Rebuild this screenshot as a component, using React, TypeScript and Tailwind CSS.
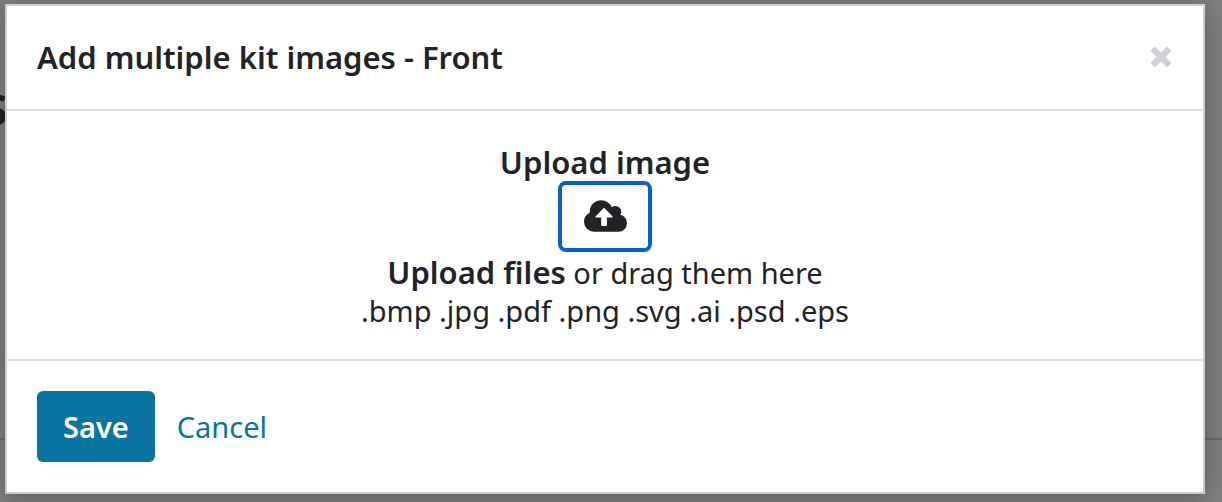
import React from 'react';

const fileTypes = ['.bmp', '.jpg', '.pdf', '.png', '.svg', '.ai', '.psd', '.eps'];

const CloseIcon: React.FC = () => (
    <svg viewBox="302 366 1188 1188" fill="currentColor" className="h-5 w-5" aria-hidden="true">
        <path d="M1490 1322q0 40-28 68l-136 136q-28 28-68 28t-68-28l-294-294-294 294q-28 28-68 28t-68-28l-136-136q-28-28-28-68t28-68l294-294-294-294q-28-28-28-68t28-68l136-136q28-28 68-28t68 28l294 294 294-294q28-28 68-28t68 28l136 136q28 28 28 68t-28 68l-294 294 294 294q28 28 28 68z" />
    </svg>
);

const CloudUploadIcon: React.FC = () => (
    <svg viewBox="0 128 1920 1408" fill="currentColor" className="h-8 w-[43px]" aria-hidden="true">
        <path d="M1280 864q0-14-9-23l-352-352q-9-9-23-9t-23 9l-351 351q-10 12-10 24 0 14 9 23t23 9h224v352q0 13 9.5 22.5t22.5 9.5h192q13 0 22.5-9.5t9.5-22.5v-352h224q13 0 22.5-9.5t9.5-22.5zm640 288q0 159-112.5 271.5t-271.5 112.5h-1088q-185 0-316.5-131.5t-131.5-316.5q0-130 70-240t188-165q-2-30-2-43 0-212 150-362t362-150q156 0 285.5 87t188.5 231q71-62 166-62 106 0 181 75t75 181q0 76-41 138 130 31 213.5 135.5t83.5 238.5z" />
    </svg>
);

const App: React.FC = () => {
    return (
        <div className="relative min-h-screen overflow-hidden bg-[#808080] pt-1 pr-[17px] pb-2 pl-[5px] font-['Noto_Sans',sans-serif] text-[29px] leading-[38px] text-[#212327]">
            {/* Dimmed page behind the dialog */}
            <div aria-hidden="true" className="absolute inset-0">
                <span className="absolute top-[75px] left-[-19px] text-[56px] leading-[56px] font-semibold text-[#212327]">s</span>
                <div className="absolute inset-x-0 top-[438px] h-[2px] bg-[#6a6a6a]" />
            </div>

            <div
                role="dialog"
                aria-labelledby="dialog-title"
                className="relative border-2 border-[#cccdd2] bg-white shadow-[0_4px_24px_rgba(0,0,0,0.3)]"
            >
                {/* Header */}
                <div className="flex items-center justify-between border-b-2 border-[#e2e2e2] px-[30px] pt-8 pb-[33px]">
                    <h2 id="dialog-title" className="text-[31px] font-semibold">Add multiple kit images - Front</h2>
                    <button type="button" aria-label="Close" className="p-0.5 text-[#cfd1d5]">
                        <CloseIcon />
                    </button>
                </div>

                {/* Body */}
                <div className="flex flex-col items-center border-b-2 border-[#e2e2e2] pt-8 pb-[29px] text-center">
                    <h3 className="text-[31px] font-semibold">Upload image</h3>
                    <button
                        type="button"
                        aria-label="Upload image"
                        className="flex h-[71px] w-[94px] items-center justify-center rounded-lg border-4 border-[#0561d3] pb-0.5"
                    >
                        <CloudUploadIcon />
                    </button>
                    <p className="mt-px">
                        <strong className="text-[31px] font-semibold">Upload files</strong> or drag them here
                    </p>
                    <p>{fileTypes.join(' ')}</p>
                </div>

                {/* Footer */}
                <div className="flex items-center gap-[22px] p-[30px]">
                    <button type="button" className="h-[71px] rounded-md bg-[#0974a2] px-[26px] font-semibold text-white">
                        Save
                    </button>
                    <button type="button" className="text-[#0974a2]">Cancel</button>
                </div>
            </div>
        </div>
    );
};

export default App;
